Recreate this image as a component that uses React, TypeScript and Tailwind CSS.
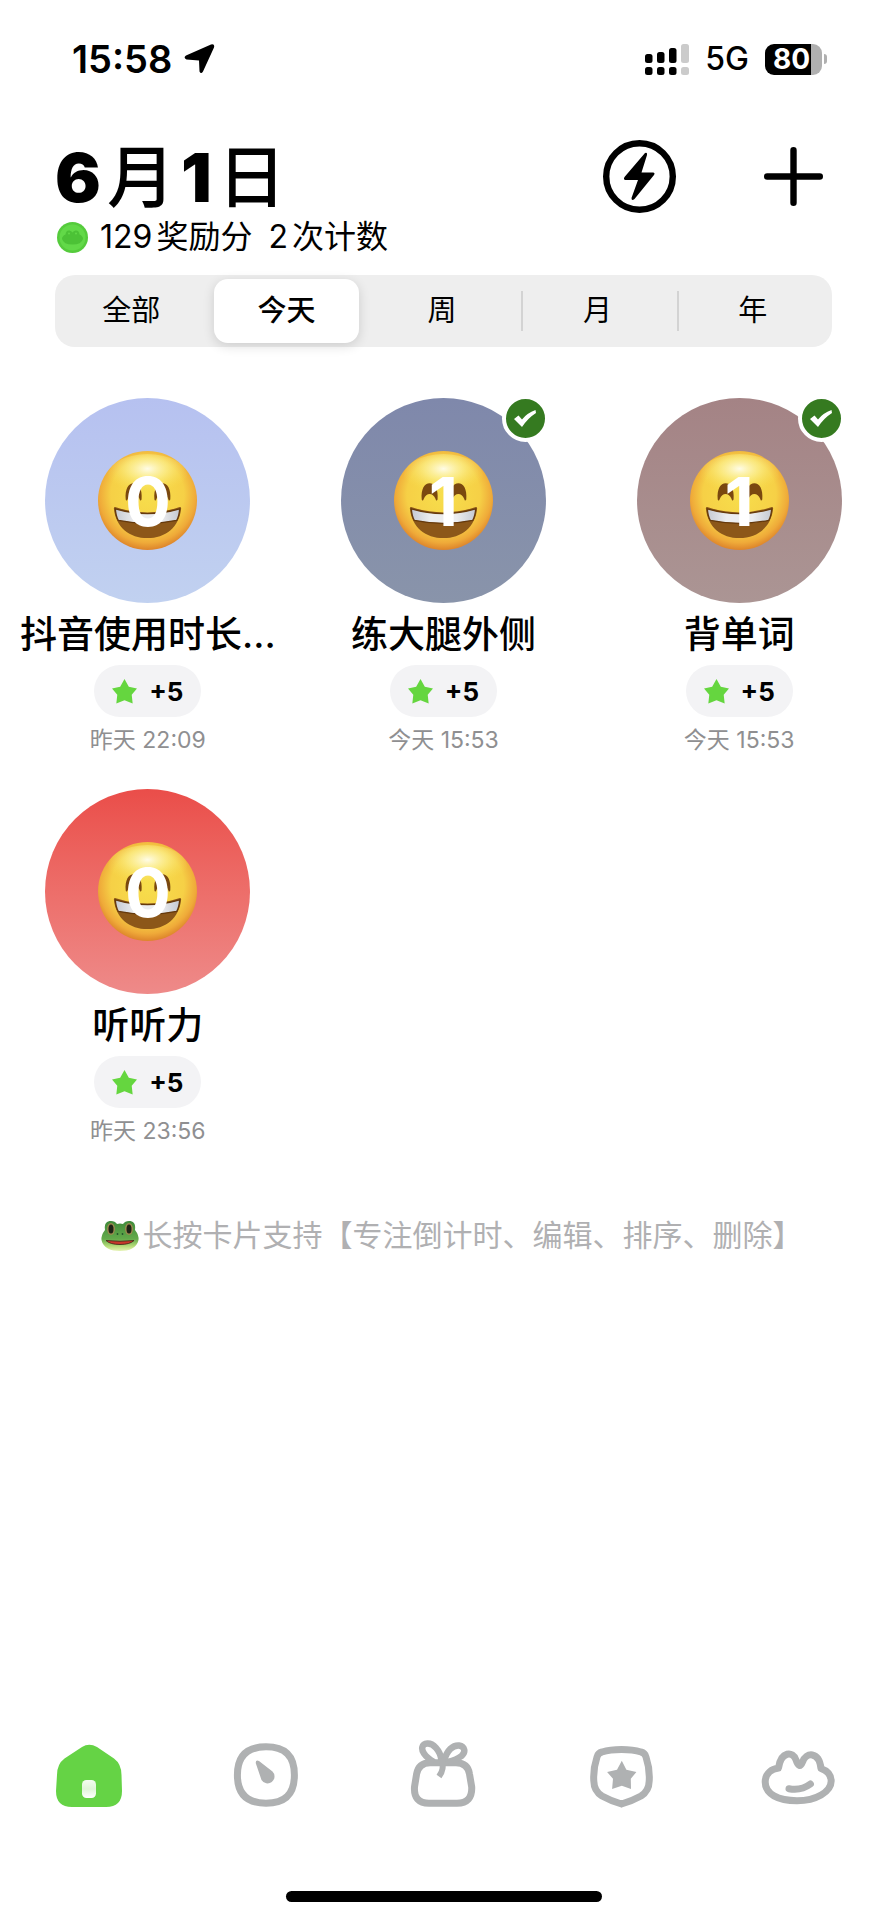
import { useState, type ReactNode } from "react";

const tabs = ["全部", "今天", "周", "月", "年"];

const habits = [
  { id: 1, name: "抖音使用时长...", count: 0, points: 5, time: "昨天 22:09", color: "from-[#b6c1f0] to-[#c1d1f0]" },
  { id: 2, name: "练大腿外侧", count: 1, points: 5, time: "今天 15:53", color: "from-[#7f88ab] to-[#8994aa]" },
  { id: 3, name: "背单词", count: 1, points: 5, time: "今天 15:53", color: "from-[#a48385] to-[#ab9594]" },
  { id: 4, name: "听听力", count: 0, points: 5, time: "昨天 23:56", color: "from-[#ea4d49] to-[#ee8a89]" },
];

function StatusBar() {
  return (
    <div className="flex h-[118px] items-center justify-between pl-[72px] pr-[60px]">
      <div className="flex items-center gap-3">
        <span className="text-[38px] font-semibold leading-none">15:58</span>
        <svg className="h-[30px] w-[31px]" viewBox="0 0 31 30" fill="currentColor">
          <path d="M27 .5Q31 -.5 30 3.500L19 27.500Q17 30.500 15.500 27.500L15 16.500L2.500 15.500Q-1 14 2 11.500Z" />
        </svg>
      </div>
      <div className="flex items-center gap-4">
        <svg className="h-[31px] w-[44px]" viewBox="0 0 44 31">
          <g fill="#000">
            <rect x="0" y="10" width="7.500" height="9" rx="2.500" />
            <rect x="12" y="8" width="7.500" height="11" rx="2.500" />
            <rect x="24" y="4" width="7.500" height="15" rx="2.500" />
            <rect x="0" y="23" width="7.500" height="8" rx="2.500" />
            <rect x="12" y="23" width="7.500" height="8" rx="2.500" />
            <rect x="24" y="23" width="7.500" height="8" rx="2.500" />
          </g>
          <g fill="#cbcbcb">
            <rect x="36" y="0" width="8" height="19" rx="2.500" />
            <rect x="36" y="23" width="8" height="8" rx="2.500" />
          </g>
        </svg>
        <span className="text-[32px] font-medium leading-none">5G</span>
        <div className="flex items-center gap-[2px]">
          <div className="flex h-[31px] w-[57px] items-center justify-center rounded-[9px] bg-linear-to-r from-black from-80% to-[#b0b0b0] to-80% pr-1 text-[28px] font-bold text-white">
            80
          </div>
          <div className="h-[10px] w-[3px] rounded-r-full bg-[#b0b0b0]" />
        </div>
      </div>
    </div>
  );
}

function FrogCoin() {
  return (
    <svg className="size-[31px]" viewBox="0 0 31 31">
      <circle cx="15.500" cy="15.500" r="15.500" fill="#55cb3c" />
      <circle cx="15.500" cy="15.500" r="13" fill="#62d948" />
      <path d="M8.500 12.500Q9 8 12.500 8.500Q14.500 9 15.500 10.500Q16.500 9 18.500 8.500Q22 8 22.500 12.500Q26 14 26 17Q24.500 22.500 15.500 22.500Q6.500 22.500 5 17Q5 14 8.500 12.500Z" fill="#4cc236" />
      <circle cx="12" cy="11.500" r="1" fill="#62d948" />
      <circle cx="19" cy="11.500" r="1" fill="#62d948" />
    </svg>
  );
}

function Smiley() {
  return (
    <svg className="size-[99px]" viewBox="0 0 100 100">
      <defs>
        <radialGradient id="face" cx="50%" cy="44%" r="56%">
          <stop offset="0" stopColor="#f7de4c" />
          <stop offset=".66" stopColor="#f6d046" />
          <stop offset=".87" stopColor="#efaa39" />
          <stop offset="1" stopColor="#dd842b" />
        </radialGradient>
        <radialGradient id="shine" cx="50%" cy="34%" r="55%">
          <stop offset="0" stopColor="#fffef0" stopOpacity=".95" />
          <stop offset=".45" stopColor="#fdf6a0" stopOpacity=".6" />
          <stop offset="1" stopColor="#f8e353" stopOpacity="0" />
        </radialGradient>
        <linearGradient id="teeth" x1="0" y1="0" x2="1" y2="0">
          <stop offset="0" stopColor="#c5c9d2" />
          <stop offset=".3" stopColor="#ecedef" />
          <stop offset=".7" stopColor="#ecedef" />
          <stop offset="1" stopColor="#c5c9d2" />
        </linearGradient>
      </defs>
      <circle cx="50" cy="50" r="50" fill="url(#face)" />
      <ellipse cx="50" cy="25" rx="40" ry="22" fill="url(#shine)" />
      <path d="M28 49C27 38 31 32.500 36 32.500S45 38 44 49C43 51 42.500 50 42 48.500C40.500 45 38.500 43.500 36 43.500S31.500 45 30 48.500C29.500 50 28.500 51 28 49Z" fill="#7a480f" />
      <path d="M57 49C56 38 60 32.500 65 32.500S74 38 73 49C72 51 71.500 50 71 48.500C69.500 45 67.500 43.500 65 43.500S60.500 45 59 48.500C58.500 50 57.500 51 57 49Z" fill="#7a480f" />
      <path d="M16 58Q16 56 19 57Q50 67 81 57Q84 56 84 58C82 77 68 88 50 88S18 77 16 58Z" fill="#8c5719" />
      <path d="M17.500 58.500Q50 68 82.500 58.500Q82 66 79.500 70Q50 76 20.500 70Q18 66 17.500 58.500Z" fill="url(#teeth)" stroke="#65390c" strokeWidth="1.300" />
    </svg>
  );
}

function FrogFace() {
  return (
    <svg className="h-[31px] w-[38px]" viewBox="0 0 38 31">
      <defs>
        <linearGradient id="frog" x1="0" y1="0" x2="0" y2="1">
          <stop offset="0" stopColor="#3f8a3a" />
          <stop offset=".6" stopColor="#64aa4b" />
          <stop offset=".85" stopColor="#b9de7c" />
          <stop offset="1" stopColor="#e6f3b5" />
        </linearGradient>
      </defs>
      <path d="M4 10C3 3 6 1 10 1Q14 1 16 4Q19 3 22 4Q24 1 28 1C32 1 35 3 34 10Q38 15 37.500 20C36 28 28 31 19 31S2 28 .5 20Q0 15 4 10Z" fill="url(#frog)" />
      <ellipse cx="10" cy="9" rx="4" ry="6" fill="#9b8a4e" />
      <ellipse cx="28" cy="9" rx="4" ry="6" fill="#9b8a4e" />
      <ellipse cx="10" cy="9" rx="2.500" ry="4.500" fill="#1d2216" />
      <ellipse cx="28" cy="9" rx="2.500" ry="4.500" fill="#1d2216" />
      <circle cx="16.500" cy="14" r=".9" fill="#24552a" />
      <circle cx="21.500" cy="14" r=".9" fill="#24552a" />
      <path d="M5 20.500Q19 22 33 20.500Q29 24.500 19 24.500T5 20.500Z" fill="#c8382b" stroke="#3d2114" strokeWidth=".8" />
    </svg>
  );
}

function DoneBadge() {
  return (
    <span className="absolute -top-[3px] -right-[3px] flex size-[47px] items-center justify-center rounded-full border-4 border-white bg-[#357a20]">
      <svg className="h-[17px] w-[22px]" viewBox="0 0 22 17" fill="#fff">
        <path d="M0 9L4.500 5.500L8 9.500Q13 3 21.500 0L22 3Q14 8 8 17Z" />
      </svg>
    </span>
  );
}

function HabitCard({ habit }: { habit: (typeof habits)[number] }) {
  return (
    <div className="flex flex-col items-center">
      <button
        type="button"
        aria-label={habit.name}
        className={`relative grid size-[205px] place-items-center rounded-full bg-linear-to-b ${habit.color}`}
      >
        <Smiley />
        <span className="absolute inset-0 flex items-center justify-center text-[68px] font-bold leading-none text-white">
          {habit.count}
        </span>
        {habit.count > 0 && <DoneBadge />}
      </button>
      <h2 className="mt-[5px] mb-[3px] whitespace-nowrap text-[37px] font-medium leading-[54px]">{habit.name}</h2>
      <div className="flex h-[52px] items-center gap-3 rounded-full bg-[#f3f3f5] px-[18px]">
        <svg className="size-[25px]" viewBox="0 0 26 26" fill="#65d63f">
          <path d="M13 0L17.500 8L26 10L20.500 16.500L21.500 25.500L13 22L4.500 25.500L5.500 16.500L0 10L8.500 8Z" />
        </svg>
        <span className="text-[26px] font-bold">+{habit.points}</span>
      </div>
      <p className="mt-2 text-[23px] leading-[30px] text-[#8f8f91]">{habit.time}</p>
    </div>
  );
}

function NavItem({ label, children }: { label: string; children: ReactNode }) {
  return (
    <a href="#" aria-label={label} className="flex justify-center">
      <svg className="h-[68px] w-[80px]" viewBox="0 0 80 68" fill="none" stroke="#afb1b2" strokeWidth="7">
        {children}
      </svg>
    </a>
  );
}

export default function App() {
  const [active, setActive] = useState("今天");

  return (
    <div className="flex min-h-screen flex-col bg-white font-[family-name:Inter,'Noto_Sans_CJK_SC',sans-serif] text-black">
      <StatusBar />

      <header className="mt-4 px-[55px]">
        <div className="flex h-[85px] items-center justify-between pr-[9px]">
          <h1 className="flex items-center gap-[6px] text-[68px] leading-none">
            <span className="font-black">6</span>
            <span className="font-medium">月</span>
            <span className="font-black">1</span>
            <span className="font-medium">日</span>
          </h1>
          <div className="flex items-center gap-[88px]">
            <button type="button" aria-label="快速计时">
              <svg className="size-[73px]" viewBox="0 0 73 73">
                <circle cx="36.500" cy="36.500" r="33.300" fill="none" stroke="#000" strokeWidth="6.400" />
                <path d="M42 13Q44.500 12 44 15L38.500 32.500H50Q52.500 33 51 35L31.500 59Q28.500 61.500 28.500 58L35 40H22.500Q20 39.500 21.500 37Z" />
              </svg>
            </button>
            <button type="button" aria-label="添加">
              <svg className="size-[59px]" viewBox="0 0 59 59" stroke="#000" strokeWidth="6.400" strokeLinecap="round">
                <path d="M29.500 3.200V55.800M3.200 29.500H55.800" />
              </svg>
            </button>
          </div>
        </div>
        <div className="flex h-9 items-center gap-1 pl-[2px] text-[32px] leading-none">
          <FrogCoin />
          <span className="ml-2">129</span>
          <span>奖励分</span>
          <span className="ml-3">2</span>
          <span>次计数</span>
        </div>

        <div className="mt-5 grid h-18 grid-cols-5 items-center rounded-[20px] bg-[#eeeeee]">
          {tabs.map((tab, index) => (
            <button
              key={tab}
              type="button"
              onClick={() => setActive(tab)}
              className={`flex h-16 items-center text-[29px] ${active === tab ? "font-medium" : ""}`}
            >
              <span className={`h-10 w-[2px] ${index > 2 ? "bg-[#d3d3d3]" : ""}`} />
              <span
                className={`ml-[2px] mr-[7px] flex h-full flex-1 items-center justify-center rounded-[14px] ${
                  active === tab ? "bg-white shadow-[0_3px_12px_rgba(0,0,0,0.14)]" : ""
                }`}
              >
                {tab}
              </span>
            </button>
          ))}
        </div>
      </header>

      <main>
        <div className="mt-[51px] grid grid-cols-3 gap-y-[34px]">
          {habits.map((habit) => (
            <HabitCard key={habit.id} habit={habit} />
          ))}
        </div>
        <p className="mt-[69px] flex items-center justify-center gap-1 pl-4 text-[30px] leading-10 text-[#b0b0b2]">
          <FrogFace />
          <span>长按卡片支持【专注倒计时、编辑、排序、删除】</span>
        </p>
      </main>

      <nav className="mt-auto grid grid-cols-5">
        <NavItem label="首页">
          <defs>
            <linearGradient id="door" x1="0" y1="0" x2="0" y2="1">
              <stop offset="0" stopColor="#f4fcf1" />
              <stop offset=".5" stopColor="#dff5d8" />
              <stop offset="1" stopColor="#fff" />
            </linearGradient>
          </defs>
          <path d="M33 7Q40 2.500 48 7L65 18.500Q72.500 24 72.500 35L73 51Q73 67 57 67H23Q7 67 7 51L8 35Q8 24 15.500 18.500Z" fill="#65d345" stroke="none" />
          <rect x="33" y="40" width="14" height="18" rx="4.500" fill="url(#door)" stroke="none" />
        </NavItem>
        <NavItem label="计时">
          <path d="M40 6.800C59 6.800 68.400 16 68.400 35S59 63.200 40 63.200S11.400 54 11.400 35S21 6.800 40 6.800Z" />
          <path d="M29.700 23Q29.700 19.500 33 21L46.500 31.500A7 7 0 1 1 35.500 40Z" fill="#afb1b2" stroke="none" />
        </NavItem>
        <NavItem label="奖励">
          <path d="M27 22.700H53Q65 23 66.500 34L68.700 47Q69.500 63 54 63.200H26Q10.500 63 11.500 47L13.600 34Q15.500 23 27 22.700Z" />
          <path d="M38.500 20C37 10 30 3.200 24.500 3.500C18.500 4 18 9 21 13.500Q24 18 31 22M41 21C44 10 50 5 56 5.500C62 6.500 63 12 58.500 16Q54 19.500 45 22" strokeWidth="6.500" />
          <path d="M38.800 18C40.500 27 40 31 36 36.500" strokeWidth="6" />
        </NavItem>
        <NavItem label="成就">
          <path d="M40.500 9.500Q52 9.500 60 12Q64 13 65 17Q69 29 68.200 41Q68 51 60 56Q51 61 40.500 64Q30 61 21 56Q13 51 12.800 41Q12 29 16 17Q17 13 21 12Q29 9.500 40.500 9.500Z" />
          <path d="M40.800 20.700L45.400 29.700L55.400 32L49.800 38.700L50 49L40.800 45.700L31.100 49L32 38.700L26.100 32L36 29.700Z" fill="#afb1b2" stroke="none" />
        </NavItem>
        <NavItem label="我的">
          <path d="M20.500 28C23 11 35 11 38 20Q41.300 30 44.500 22C48 12 61 11 63 28.500Q73 32 73.200 41C73 52 58 60.700 39 60.700C20 60.700 7.200 54 7.200 42C7.200 33 14 29 20.500 28Z" strokeLinejoin="round" />
          <path d="M31 48.700Q43 51 52.400 44" strokeLinecap="round" />
        </NavItem>
      </nav>
      <div className="mx-auto mt-[83px] mb-[18px] h-[11px] w-[316px] rounded-full bg-black" />
    </div>
  );
}
